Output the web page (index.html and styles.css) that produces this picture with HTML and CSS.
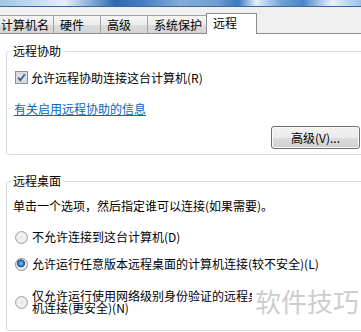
FILE: index.html
```html
<!DOCTYPE html>
<html lang="zh-CN">
<head>
    <meta charset="UTF-8">
    <meta name="viewport" content="width=device-width, initial-scale=1.0">
    <title>系统属性 - 远程</title>
    <link rel="stylesheet" href="styles.css">
</head>
<body>
    <div class="titlebar"></div>
    <div class="tabstrip">
        <div class="tab first">计算机名</div>
        <div class="tab">硬件</div>
        <div class="tab">高级</div>
        <div class="tab">系统保护</div>
        <div class="tab active">远程</div>
    </div>
    <div class="page">
        <fieldset class="group assist">
            <legend>远程协助</legend>
            <label class="check-row">
                <span class="checkbox">
                    <svg width="13" height="13" viewBox="0 0 13 13">
                        <rect x="0.5" y="0.5" width="12" height="12" fill="#f4f4f4" stroke="#8e8f8f"/>
                        <rect x="2" y="2" width="9" height="9" fill="#dfe3e8" stroke="#c2c8cf" stroke-width="1"/>
                        <path d="M3.2 6.6 L5.4 9.2 L9.8 3.2" fill="none" stroke="#3c5d8c" stroke-width="1.8"/>
                    </svg>
                </span>
                允许远程协助连接这台计算机(R)
            </label>
            <a class="info-link" href="#">有关启用远程协助的信息</a>
            <div class="button-row">
                <button class="btn">高级(V)...</button>
            </div>
        </fieldset>

        <fieldset class="group desktop">
            <legend>远程桌面</legend>
            <p class="hint">单击一个选项，然后指定谁可以连接(如果需要)。</p>
            <label class="radio-row first-radio">
                <span class="radio"></span>
                不允许连接到这台计算机(D)
            </label>
            <label class="radio-row">
                <span class="radio checked"></span>
                允许运行任意版本远程桌面的计算机连接(较不安全)(L)
            </label>
            <label class="radio-row multi">
                <span class="radio"></span>
                <span class="radio-text">仅允许运行使用网络级别身份验证的远程桌面的计算机连接(更安全)(N)</span>
            </label>
        </fieldset>
    </div>
    <div class="watermark">软件技巧</div>
</body>
</html>
```

FILE: styles.css
```css
body {
    margin: 0;
    padding: 0;
    background: #fff;
    font-family: "Noto Sans CJK SC", "DejaVu Sans", sans-serif;
    font-size: 12px;
    color: #000;
    overflow: hidden;
    width: 361px;
    height: 332px;
    position: relative;
}
.titlebar {
    height: 6px;
    border-bottom: 1px solid #3a6aa5;
    background: linear-gradient(90deg, #a4c4e4 0%, #cfe2f4 12%, #e6f0fa 18%, #7aa4d4 26%, #2e68ae 32%, #4a80c2 40%, #86acd8 50%, #6f9ed2 60%, #3d78bd 66%, #e4f0fb 71%, #6e9fd4 78%, #4e86c6 84%, #eaf4ff 92%, #9cc0e6 100%);
}
.tabstrip {
    height: 26px;
    background: #f0f0f0;
    border-bottom: 1px solid #898c95;
    display: flex;
    align-items: flex-end;
    margin-left: -6px;
}
.tab {
    height: 17px;
    line-height: 17px;
    padding: 0 4px 0 6px;
    min-width: 36px;
    margin-left: -1px;
    border: 1px solid #a3a3a3;
    border-bottom: none;
    background: linear-gradient(180deg, #f6f6f6 0%, #ececec 50%, #dcdcdc 51%, #d4d4d4 100%);
    white-space: nowrap;
}
.tab.first { margin-left: 0; }
.tab.active {
    height: 20px;
    line-height: 18px;
    background: #fff;
    border-color: #898c95;
    margin-bottom: -1px;
    padding: 0 19px 0 6px;
    min-width: 24px;
}
.page {
    padding: 10px 0 0 6px;
}
.group {
    margin: 0 -10px 0 0;
    padding: 0 10px 5px 4px;
    border: 1px solid #d5dadf;
    border-radius: 3px;
}
.group legend {
    padding: 0 2px;
    line-height: 14px;
}
.check-row {
    display: flex;
    align-items: center;
    height: 14px;
    margin: 12px 0 0 4px;
    gap: 3px;
}
.checkbox {
    display: flex;
    width: 13px;
    height: 13px;
}
.info-link {
    display: block;
    margin: 18px 0 0 3px;
    line-height: 14px;
    color: #0a66b8;
    text-decoration: underline;
    width: fit-content;
}
.button-row {
    display: flex;
    justify-content: flex-end;
    margin-top: 10px;
}
.btn {
    width: 89px;
    height: 23px;
    font-family: inherit;
    font-size: 12px;
    color: #000;
    border: 1px solid #707070;
    border-radius: 3px;
    background: linear-gradient(180deg, #f2f2f2 0%, #ebebeb 50%, #dddddd 51%, #cfcfcf 100%);
    box-shadow: inset 0 0 0 1px #fcfcfc;
    padding: 0;
}
.desktop {
    margin-top: 19px;
    height: 150px;
}
.hint {
    margin: 11px 0 0 2px;
    line-height: 14px;
}
.radio-row {
    display: flex;
    align-items: center;
    gap: 4px;
    margin: 13px 0 0 4px;
    line-height: 14px;
    white-space: nowrap;
}
.radio-row.first-radio { margin-top: 17px; }
.radio-row.multi {
    margin-top: 19px;
    white-space: normal;
}
.radio-text {
    width: 280px;
    line-height: 12px;
}
.radio {
    flex: none;
    width: 11px;
    height: 11px;
    border: 1px solid #a2a2a2;
    border-radius: 50%;
    background: radial-gradient(circle at 50% 50%, #e4e4e4 0%, #f4f4f4 45%, #d0d0d0 100%);
    box-sizing: content-box;
}
.radio.checked {
    border-color: #8c8c8c;
    background: radial-gradient(circle at 45% 40%, #8ec8f4 0%, #2a78c8 28%, #14508e 42%, #f0f0f0 48%, #dcdcdc 100%);
}
.watermark {
    position: absolute;
    left: 252px;
    top: 283px;
    width: 109px;
    height: 36px;
    background: #fff;
    color: #cdcdcd;
    font-size: 26px;
    line-height: 36px;
    padding-left: 3px;
    white-space: nowrap;
}
```
